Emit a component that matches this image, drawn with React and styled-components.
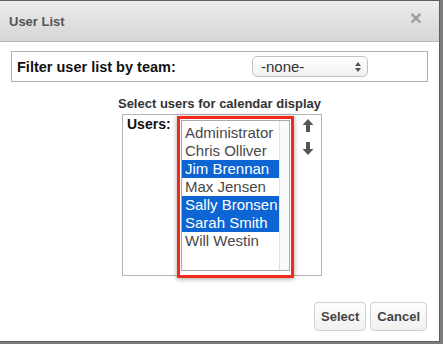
import React from 'react';
import styled, { createGlobalStyle } from 'styled-components';

const GlobalStyle = createGlobalStyle`
  html, body {
    margin: 0;
    padding: 0;
    background: #7c7c7c;
    font-family: "Liberation Sans", Arial, Helvetica, sans-serif;
  }
`;

const users = [
  { name: 'Administrator', selected: false },
  { name: 'Chris Olliver', selected: false },
  { name: 'Jim Brennan', selected: true },
  { name: 'Max Jensen', selected: false },
  { name: 'Sally Bronsen', selected: true },
  { name: 'Sarah Smith', selected: true },
  { name: 'Will Westin', selected: false },
];

const Dialog = styled.div`
  width: 440px;
  height: 342px;
  box-sizing: border-box;
  background: #fff;
  border-top: 1px solid #5e5e5e;
  border-right: 1px solid #5e5e5e;
  border-bottom: 1px solid #5e5e5e;
  display: flex;
  flex-direction: column;
`;

const Header = styled.div`
  height: 41px;
  box-sizing: border-box;
  flex: 0 0 auto;
  display: flex;
  align-items: center;
  justify-content: space-between;
  padding: 0 17px 0 9px;
  background: linear-gradient(#ececec, #d6d6d6);
  border-bottom: 1px solid #b9b9b9;
`;

const Title = styled.h1`
  margin: 0;
  font-size: 13px;
  font-weight: bold;
  color: #555;
`;

const Close = styled.span`
  font-size: 21px;
  font-weight: bold;
  line-height: 1;
  color: #9d9d9d;
  margin-top: -8px;
`;

const Body = styled.div`
  flex: 1;
  display: flex;
  flex-direction: column;
  padding: 9px 11px 0 11px;
`;

const FilterBox = styled.div`
  height: 31px;
  box-sizing: border-box;
  border: 1px solid #b0b0b0;
  display: flex;
  align-items: center;
  padding-left: 5px;
`;

const FilterLabel = styled.span`
  flex: 0 0 235px;
  font-size: 14.5px;
  font-weight: bold;
  color: #111;
`;

const TeamSelect = styled.div`
  width: 116px;
  height: 21px;
  box-sizing: border-box;
  border: 1px solid #c2c2c2;
  border-radius: 5px;
  background: linear-gradient(#ffffff, #f1f1f1);
  display: flex;
  align-items: center;
  justify-content: space-between;
  padding: 0 6px 0 8px;
  font-size: 15px;
  color: #333;
`;

const Heading = styled.h2`
  margin: 14px 0 2px;
  height: 16px;
  font-size: 13px;
  font-weight: bold;
  color: #333;
  text-align: center;
`;

const UserBox = styled.div`
  width: 200px;
  height: 162px;
  box-sizing: border-box;
  margin-left: 111px;
  border: 1px solid #b5b5b5;
  display: flex;
  align-items: flex-start;
  padding: 0 0 0 4px;
`;

const UsersLabel = styled.span`
  flex: 0 0 50px;
  font-size: 14px;
  font-weight: bold;
  line-height: 18px;
  color: #111;
`;

const Highlight = styled.div`
  width: 117px;
  height: 162px;
  box-sizing: border-box;
  margin-top: 1px;
  border: 3px solid #f2291b;
  padding: 1px;
  box-shadow: 0 1px 5px rgba(0, 0, 0, 0.35);
  background: #fff;
`;

const ListBox = styled.div`
  height: 151px;
  box-sizing: border-box;
  border: 1px solid #a9a9a9;
  display: flex;
`;

const Items = styled.ul`
  flex: 1;
  margin: 0;
  padding: 3px 0 0;
  list-style: none;
`;

const Item = styled.li`
  height: 18px;
  line-height: 18px;
  padding-left: 3px;
  font-size: 15px;
  white-space: nowrap;
  color: ${(p) => (p.$selected ? '#fff' : '#484848')};
  background: ${(p) => (p.$selected ? '#0d64d3' : 'transparent')};
`;

const Track = styled.div`
  flex: 0 0 9px;
  border-left: 1px solid #e2e2e2;
  background: #fafafa;
`;

const Arrows = styled.div`
  display: flex;
  flex-direction: column;
  gap: 10px;
  margin: 4px 0 0 8px;
`;

const Footer = styled.div`
  display: flex;
  justify-content: flex-end;
  gap: 4px;
  margin: 26px 1px 0 0;
`;

const Button = styled.button`
  height: 29px;
  padding: 0 6px;
  border: 1px solid #d0d0d0;
  border-radius: 4px;
  background: linear-gradient(#fdfdfd, #f1f1f1);
  font-family: "Liberation Sans", Arial, sans-serif;
  font-size: 13px;
  font-weight: bold;
  color: #444;
`;

const ArrowIcon = ({ down }) => (
  <svg width="12" height="13" viewBox="0 0 12 13" style={{ transform: down ? 'rotate(180deg)' : 'none' }}>
    <path d="M6 0 L11.5 6 L8 6 L8 13 L4 13 L4 6 L0.5 6 Z" fill="#555" />
  </svg>
);

const Spinner = () => (
  <svg width="6" height="12" viewBox="0 0 6 12">
    <path d="M3 1 L6 5 L0 5 Z" fill="#555" />
    <path d="M3 11 L6 7 L0 7 Z" fill="#555" />
  </svg>
);

export default function App() {
  return (
    <>
      <GlobalStyle />
      <Dialog>
        <Header>
          <Title>User List</Title>
          <Close>×</Close>
        </Header>
        <Body>
          <FilterBox>
            <FilterLabel>Filter user list by team:</FilterLabel>
            <TeamSelect>
              <span>-none-</span>
              <Spinner />
            </TeamSelect>
          </FilterBox>
          <Heading>Select users for calendar display</Heading>
          <UserBox>
            <UsersLabel>Users:</UsersLabel>
            <Highlight>
              <ListBox>
                <Items>
                  {users.map((u) => (
                    <Item key={u.name} $selected={u.selected}>
                      {u.name}
                    </Item>
                  ))}
                </Items>
                <Track />
              </ListBox>
            </Highlight>
            <Arrows>
              <ArrowIcon />
              <ArrowIcon down />
            </Arrows>
          </UserBox>
          <Footer>
            <Button>Select</Button>
            <Button>Cancel</Button>
          </Footer>
        </Body>
      </Dialog>
    </>
  );
}
